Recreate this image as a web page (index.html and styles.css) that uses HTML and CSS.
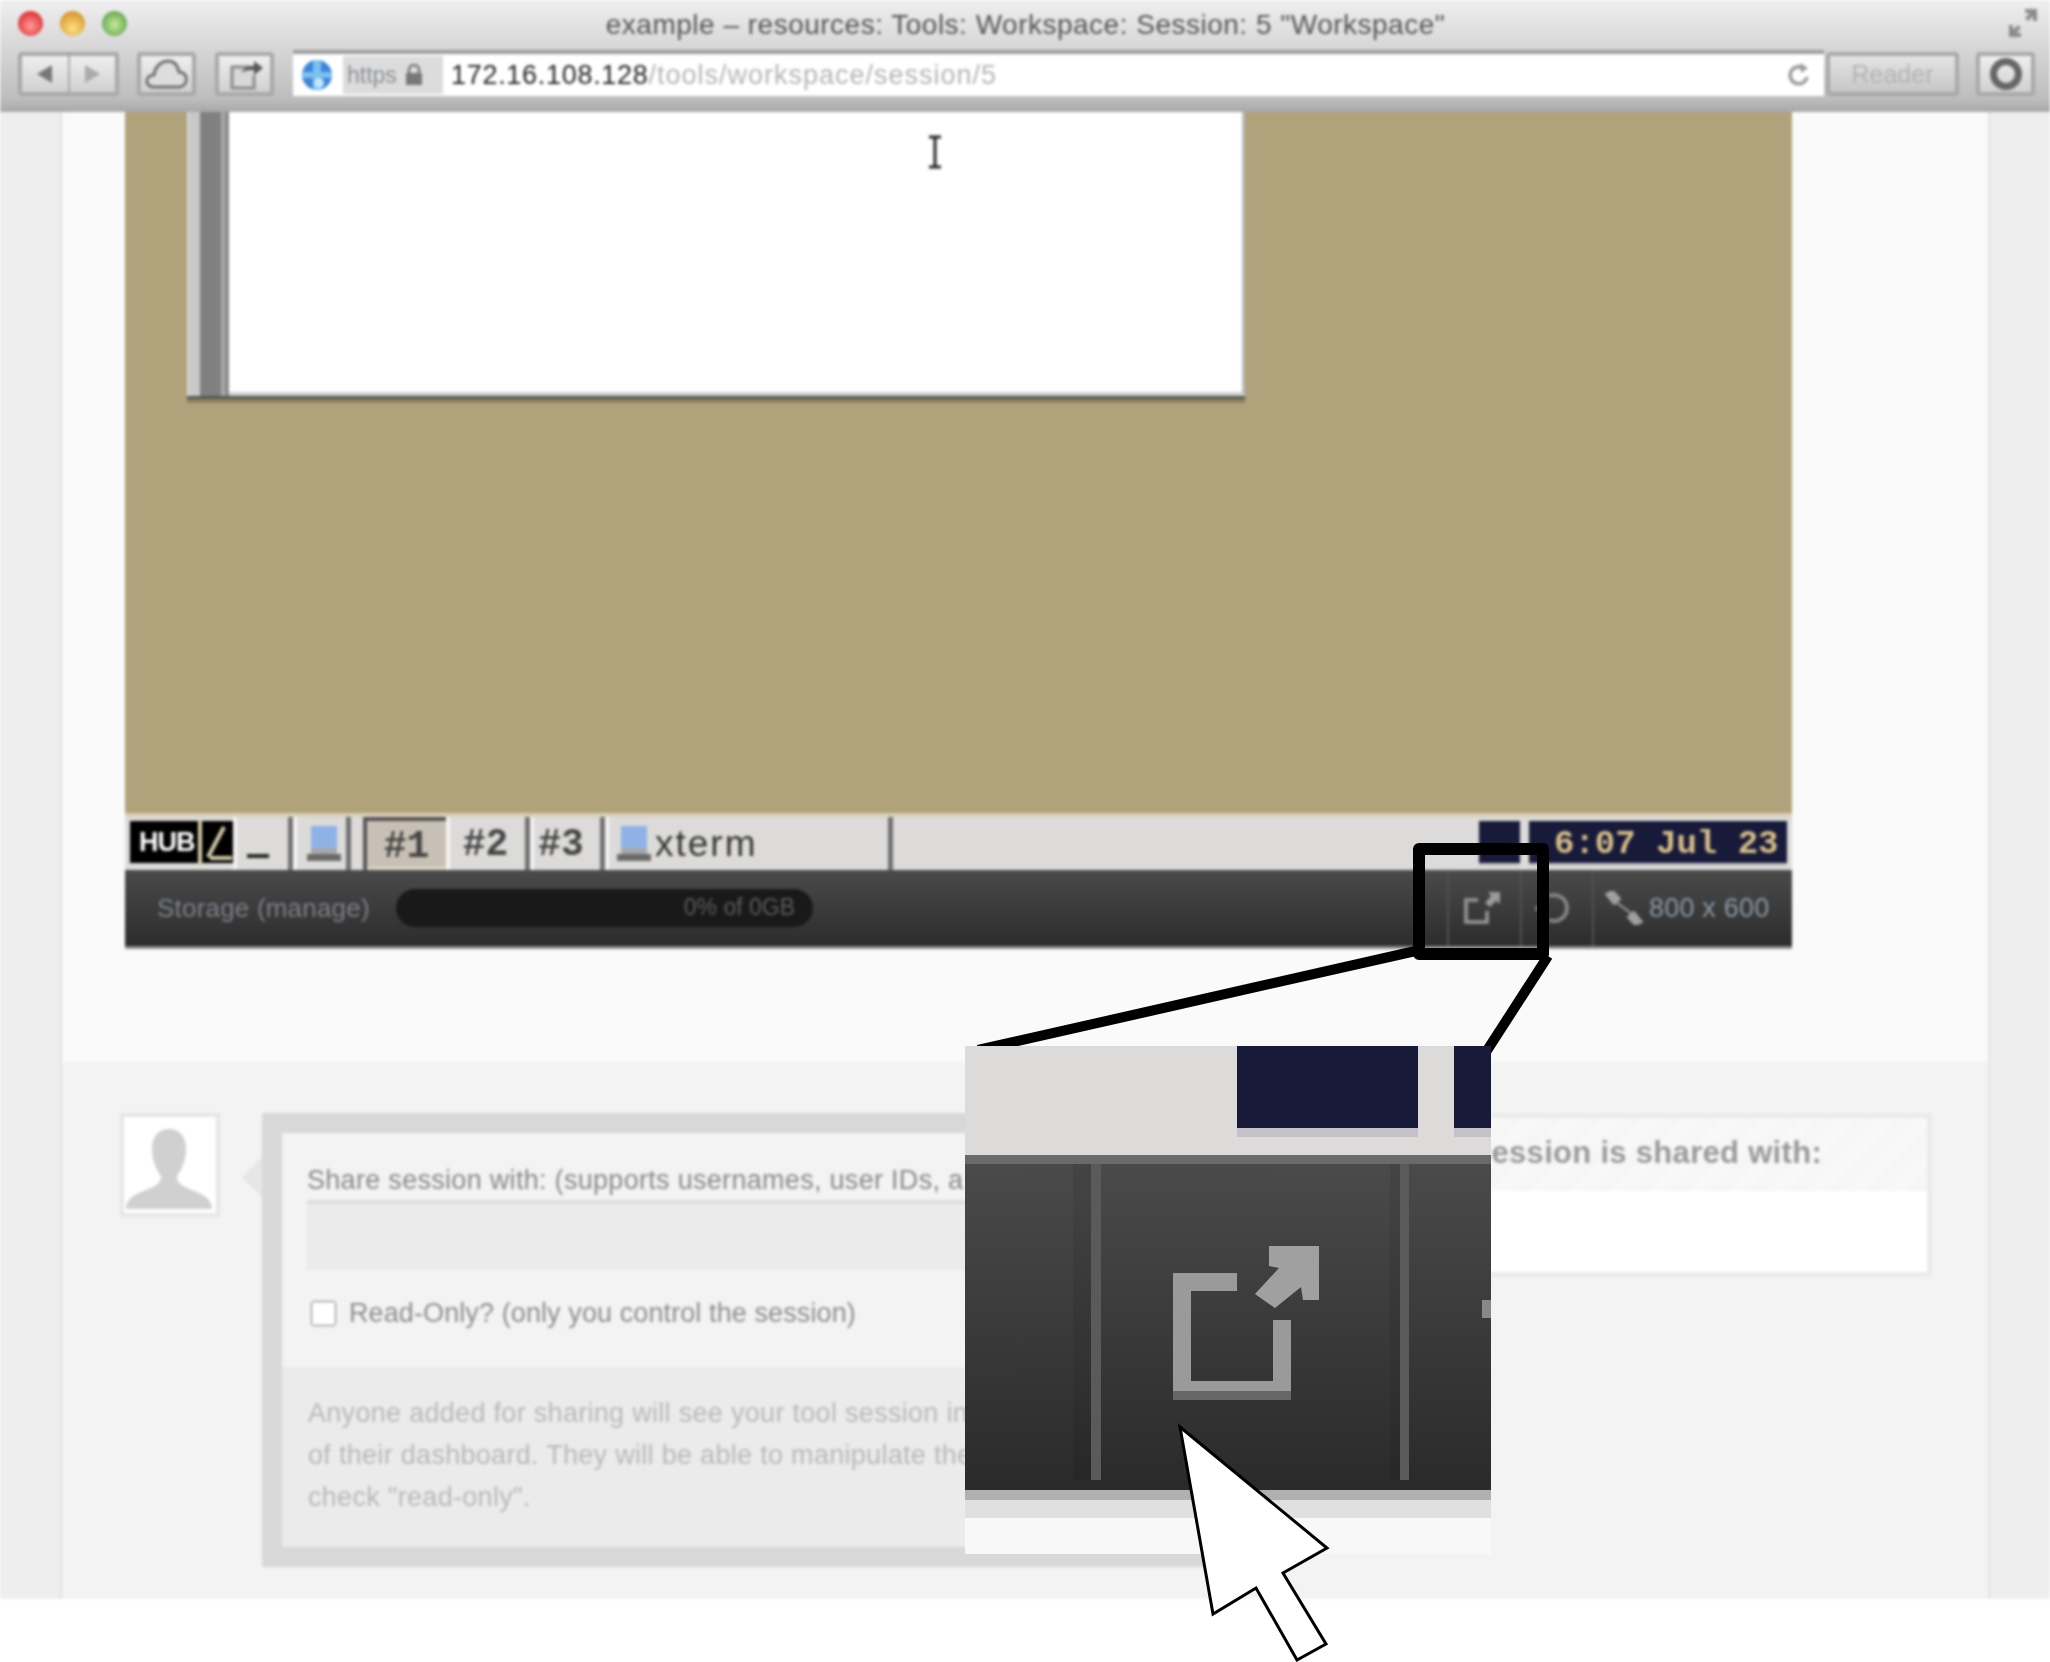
FILE: index.html
```html
<!DOCTYPE html>
<html lang="en">
<head>
    <meta charset="UTF-8">
    <meta name="viewport" content="width=device-width, initial-scale=1.0">
    <title>example - resources: Tools: Workspace: Session: 5 "Workspace"</title>
    <link rel="stylesheet" href="styles.css">
</head>
<body>

<div class="browser">
    <div class="chrome">
        <div class="title-row">
            <span class="light red"></span>
            <span class="light amber"></span>
            <span class="light green"></span>
            <span class="window-title">example – resources: Tools: Workspace: Session: 5 "Workspace"</span>
            <svg class="fullscreen" width="30" height="32" viewBox="0 0 30 32"><path d="M17 2h12v12h-4V9l-5 5-3-3 5-5h-5zM1 18h4v5l5-5 3 3-5 5h5v4H1z" fill="#8a8a8a"/></svg>
        </div>
        <div class="tool-row">
            <div class="tool-btn nav-btn">
                <span class="nav-half"><svg width="18" height="20" viewBox="0 0 18 20"><path d="M16 1v18L1 10z" fill="#777"/></svg></span>
                <span class="nav-half"><svg width="18" height="20" viewBox="0 0 18 20"><path d="M2 1v18l15-9z" fill="#aaa"/></svg></span>
            </div>
            <div class="tool-btn cloud-btn">
                <svg width="44" height="32" viewBox="0 0 44 32"><path d="M9 29c-10 0-9-12 0-12 1-9 8-14 14-14 7 0 10 6 11 11 10 0 10 15-1 15z" fill="#ddd" stroke="#707070" stroke-width="3"/></svg>
            </div>
            <div class="tool-btn share-btn">
                <svg width="38" height="32" viewBox="0 0 38 32"><path d="M24 9H6v21h22V17" fill="#d8d8d8" stroke="#8a8a8a" stroke-width="3"/><path d="M15 15c3-6 8-7 13-7V3l9 7-9 7v-5c-5 0-9 0-13 3z" fill="#555"/></svg>
            </div>
            <div class="url-bar">
                <svg class="globe" width="32" height="32" viewBox="0 0 32 32"><circle cx="16" cy="16" r="15" fill="#3c86d8"/><path d="M12 1h8v30h-8zM1 13h30v6H1z" fill="#7cc0f0"/><circle cx="18" cy="24" r="5" fill="#c4e6fa"/></svg>
                <div class="url-secure">
                    <span>https</span>
                    <svg width="18" height="22" viewBox="0 0 18 22"><path d="M4 10V6a5 5 0 0 1 10 0v4" fill="none" stroke="#777" stroke-width="2.5"/><rect x="1" y="9" width="16" height="12" fill="#777"/></svg>
                </div>
                <div class="url-text"><span class="url-host">172.16.108.128</span><span class="url-path">/tools/workspace/session/5</span></div>
                <svg class="reload" width="24" height="26" viewBox="0 0 24 26"><path d="M20 15a8.500 8.500 0 1 1-4-9" fill="none" stroke="#9a9a9a" stroke-width="3.500"/><path d="M13 1l8 5-7 5z" fill="#9a9a9a"/></svg>
            </div>
            <div class="tool-btn reader-btn">Reader</div>
            <div class="tool-btn dl-btn"><span class="dl-ring"></span></div>
        </div>
    </div>

    <div class="page">
        <div class="sheet">
            <div class="stage">
                <div class="desktop">
                    <div class="screen">
                        <div class="xterm-win">
                            <div class="win-edge"></div>
                            <div class="win-scroll"></div>
                            <div class="win-body"></div>
                        </div>
                        <svg class="ibeam" width="14" height="34" viewBox="0 0 14 34"><path d="M1 2h12M1 32h12M7 2v30" fill="none" stroke="#222" stroke-width="3"/></svg>
                    </div>
                    <div class="taskbar">
                        <div class="logo"><span>HUB</span><svg width="36" height="46" viewBox="0 0 36 46"><path d="M3 0v46M11 38L27 8M13 39h22" fill="none" stroke="#d8cfa8" stroke-width="4"/></svg></div>
                        <div class="task-item min-btn"><span class="min-line"></span></div>
                        <div class="task-item icon-item">
                            <svg class="pc" width="34" height="36" viewBox="0 0 34 36"><rect x="4" y="0" width="26" height="22" fill="#8fb2e6"/><rect x="4" y="22" width="26" height="6" fill="#a8a8a8"/><rect x="0" y="28" width="34" height="7" fill="#6a6a6a"/></svg>
                        </div>
                        <div class="task-item desk-num active">#1</div>
                        <div class="task-item desk-num num-2">#2</div>
                        <div class="task-item desk-num num-3">#3</div>
                        <div class="task-item xterm-task">
                            <svg class="pc" width="34" height="36" viewBox="0 0 34 36"><rect x="4" y="0" width="26" height="22" fill="#8fb2e6"/><rect x="4" y="22" width="26" height="6" fill="#a8a8a8"/><rect x="0" y="28" width="34" height="7" fill="#6a6a6a"/></svg>
                            <span>xterm</span>
                        </div>
                        <div class="tray-box"></div>
                        <div class="clock">6:07 Jul 23</div>
                    </div>
                    <div class="app-bar">
                        <span class="storage-label">Storage (manage)</span>
                        <div class="storage-pill">0% of 0GB</div>
                        <div class="bar-cell popout-cell">
                            <svg width="38" height="34" viewBox="0 0 38 34"><path d="M15 9H3v22h21V20" fill="none" stroke="#8e8e8e" stroke-width="4"/><path d="M25 1h12v12l-4-3-6 6-5-4 6-7z" fill="#9a9a9a"/></svg>
                        </div>
                        <div class="bar-cell refresh-cell">
                            <svg width="38" height="34" viewBox="0 0 38 34"><path d="M14 5a13 13 0 1 1 0 24" fill="none" stroke="#858585" stroke-width="4"/><rect x="0" y="15" width="5" height="5" fill="#777"/></svg>
                        </div>
                        <div class="bar-cell size-cell">
                            <svg width="38" height="34" viewBox="0 0 38 34"><path d="M1 3l7-3 7 8-6 5zM37 31l-7 3-7-8 6-5zM11 11l16 12" fill="#a0a0a0" stroke="#a0a0a0" stroke-width="2"/></svg>
                            <span>800 x 600</span>
                        </div>
                    </div>
                </div>
            </div>

            <div class="share-area">
                <div class="avatar">
                    <svg width="92" height="96" viewBox="0 0 92 96"><path d="M45 12c-11 0-17 8-17 20 0 12 5 22 9 27 0 5-2 8-8 11-10 5-27 8-27 22h86c0-14-17-17-27-22-6-3-8-6-8-11 4-5 9-15 9-27 0-12-6-20-17-20z" fill="#d0d0d0"/></svg>
                </div>
                <div class="share-form">
                    <div class="form-top">
                        <label class="form-label" for="share_with">Share session with: (supports usernames, user IDs, a</label>
                        <input class="form-input" type="text" id="share_with">
                        <label class="read-only"><input type="checkbox"> Read-Only? (only you control the session)</label>
                    </div>
                    <div class="form-hint">
                        <p>Anyone added for sharing will see your tool session in</p>
                        <p>of their dashboard. They will be able to manipulate the</p>
                        <p>check "read-only".</p>
                    </div>
                </div>
                <div class="shared-panel">
                    <div class="shared-head">session is shared with:</div>
                    <div class="shared-body"></div>
                </div>
            </div>
        </div>
    </div>
</div>

<!-- annotation drawn on top of the screenshot -->
<div class="callout-box"></div>
<svg class="callout-lines" width="2050" height="1662" viewBox="0 0 2050 1662">
    <path d="M1420 950L978 1050M1548 956L1486 1052" fill="none" stroke="#000" stroke-width="10"/>
</svg>

<div class="inset">
    <div class="inset-top">
        <div class="inset-navy first"></div>
        <div class="inset-navy second"></div>
    </div>
    <div class="inset-bar">
        <div class="inset-rule first"></div>
        <div class="inset-icon-cell">
            <svg width="146" height="155" viewBox="0 0 146 155">
                <path d="M64 36H9v108h100V74" fill="none" stroke="#9a9a9a" stroke-width="18"/>
                <path d="M0 145h118v9H0z" fill="#666"/>
                <path d="M96 0h50v54h-16l-2-13-26 21-20-14 24-26-10-2z" fill="#a0a0a0"/>
            </svg>
        </div>
        <div class="inset-rule second"></div>
        <div class="inset-spot"></div>
    </div>
    <div class="inset-foot"></div>
</div>

<svg class="pointer" width="2050" height="1662" viewBox="0 0 2050 1662">
    <path d="M1180 1427L1327 1548L1283 1573L1326 1644L1297 1660L1256 1588L1213 1614z" fill="#fff" stroke="#000" stroke-width="3"/>
</svg>

</body>
</html>
```

FILE: styles.css
```css
* {
    box-sizing: border-box;
}
body {
    margin: 0;
    width: 2050px;
    height: 1662px;
    overflow: hidden;
    position: relative;
    background-color: #fff;
    font-family: "Liberation Sans", Arial, sans-serif;
}
.browser {
    filter: blur(1.4px);
}

/* browser chrome */
.chrome {
    height: 112px;
    background: linear-gradient(#efefef, #d8d8d8 40%, #bdbdbd 88%, #a8a8a8);
}
.title-row {
    height: 50px;
    display: flex;
    align-items: center;
    padding: 0 12px 4px 18px;
    gap: 17px;
}
.light {
    width: 25px;
    height: 25px;
    border-radius: 50%;
}
.red {
    background: radial-gradient(circle at 50% 60%, #ff9a9a, #e03838 70%);
}
.amber {
    background: radial-gradient(circle at 50% 70%, #ffe080, #d89830 75%);
}
.green {
    background: radial-gradient(circle at 50% 55%, #c8ea9c, #62a850 75%);
}
.window-title {
    flex: 1;
    text-align: center;
    font-size: 28px;
    letter-spacing: 0.5px;
    color: #555;
    margin-left: -20px;
    padding: 3px 64px 0 0;
    white-space: nowrap;
}
.tool-row {
    height: 46px;
    display: flex;
    padding-left: 18px;
}
.tool-btn {
    height: 44px;
    margin-top: 2px;
    border: 4px solid #a8a8a8;
    border-radius: 4px;
    background: linear-gradient(#efefef, #d0d0d0);
    display: flex;
    align-items: center;
    justify-content: center;
}
.nav-btn {
    width: 101px;
}
.nav-half {
    flex: 1;
    height: 100%;
    display: flex;
    align-items: center;
    justify-content: center;
}
.nav-half:first-child {
    border-right: 2px solid #aaa;
}
.cloud-btn {
    width: 59px;
    margin-left: 18px;
}
.share-btn {
    width: 59px;
    margin-left: 19px;
}
.url-bar {
    width: 1531px;
    height: 46px;
    margin-left: 19px;
    border-top: 4px solid #9c9c9c;
    background-color: #fff;
    display: flex;
    align-items: center;
}
.globe {
    margin-left: 8px;
    flex-shrink: 0;
}
.url-secure {
    width: 100px;
    height: 38px;
    margin-left: 10px;
    padding-left: 4px;
    background-color: #dcdcdc;
    display: flex;
    align-items: center;
    gap: 8px;
    font-size: 23px;
    color: #8a8f96;
}
.url-text {
    flex: 1;
    padding-left: 8px;
    font-size: 27px;
    white-space: nowrap;
}
.url-host {
    color: #222;
    letter-spacing: 0.7px;
}
.url-path {
    color: #b4b4b4;
    letter-spacing: 1px;
}
.reload {
    margin-right: 13px;
}
.reader-btn {
    width: 133px;
    margin-left: 2px;
    font-size: 25px;
    color: #b4b4b4;
    background: linear-gradient(#e4e4e4, #c6c6c6);
}
.dl-btn {
    width: 59px;
    margin-left: 17px;
}
.dl-ring {
    width: 32px;
    height: 32px;
    border: 7px solid #666;
    border-radius: 50%;
}

/* page */
.page {
    height: 1487px;
    background-color: #eeeeee;
    padding: 0 62px;
}
.sheet {
    height: 100%;
    background-color: #fafafa;
    box-shadow: -2px 0 0 #e2e2e2, 2px 0 0 #e2e2e2;
    display: flex;
    flex-direction: column;
}
.stage {
    height: 950px;
    padding-left: 63px;
}
.desktop {
    width: 1667px;
    height: 837px;
    border-bottom: 3px solid #8a8a8a;
}
.screen {
    height: 705px;
    position: relative;
    background-color: #b0a27a;
    border-bottom: 4px solid #d8d0b8;
}
.xterm-win {
    position: absolute;
    left: 62px;
    top: 0;
    width: 1058px;
    height: 287px;
    display: flex;
    background-color: #fff;
    border-bottom: 3px solid #555;
    box-shadow: 0 4px 0 #8f8460;
}
.win-edge {
    width: 13px;
    background: linear-gradient(90deg, #ddd, #c8c8c8 25%);
}
.win-scroll {
    width: 29px;
    background-color: #808080;
    border-right: 4px solid #8a8a8a;
    box-shadow: inset -4px 0 0 #a8a8a8;
}
.win-body {
    flex: 1;
    border-right: 3px solid #bbb;
    border-bottom: 4px solid #d0d0d0;
}
.ibeam {
    position: absolute;
    left: 803px;
    top: 23px;
}

/* desktop taskbar */
.taskbar {
    height: 53px;
    background-color: #dcdbd9;
    display: flex;
    align-items: stretch;
    font-family: "Liberation Mono", monospace;
    font-weight: bold;
}
.logo {
    width: 103px;
    height: 42px;
    margin: 4px 0 0 5px;
    background-color: #000;
    color: #fff;
    font-family: "Liberation Sans", sans-serif;
    font-size: 27px;
    letter-spacing: -1px;
    display: flex;
    align-items: center;
    padding-left: 9px;
}
.logo svg {
    margin-left: 2px;
    flex-shrink: 0;
}
.task-item {
    display: flex;
    align-items: center;
    border-right: 5px solid #707070;
    box-shadow: inset 4px 0 0 #f4f4f4;
}
.min-btn {
    width: 60px;
    padding: 25px 0 0 14px;
}
.min-line {
    width: 22px;
    height: 4px;
    background-color: #222;
}
.icon-item {
    width: 58px;
    padding-left: 14px;
}
.desk-num {
    justify-content: center;
    font-size: 38px;
    color: #444;
    padding-top: 2px;
}
.active {
    width: 83px;
    margin-left: 12px;
    background-color: #c9c0b5;
    border: 0;
    border-top: 4px solid #555;
    border-left: 4px solid #555;
    box-shadow: inset 0 -3px 0 #e0d8c8;
}
.num-2 {
    width: 84px;
}
.num-3 {
    width: 75px;
    padding-right: 8px;
}
.xterm-task {
    width: 288px;
    padding-left: 12px;
    gap: 4px;
    color: #333;
    font-family: "Liberation Sans", sans-serif;
    font-size: 37px;
    letter-spacing: 2px;
    font-weight: normal;
}
.tray-box {
    width: 41px;
    height: 45px;
    margin: 4px 0 0 586px;
    background-color: #181a3a;
    border-bottom: 3px solid #c4c2c7;
}
.clock {
    width: 258px;
    height: 45px;
    margin: 4px 0 0 9px;
    background-color: #181a3a;
    border-bottom: 3px solid #c4c2c7;
    color: #d8c088;
    font-size: 34px;
    line-height: 47px;
    padding-left: 25px;
    white-space: nowrap;
    overflow: hidden;
}

/* bar under the desktop */
.app-bar {
    height: 76px;
    background: linear-gradient(#4a4a4a, #2c2c2c);
    display: flex;
    align-items: center;
}
.storage-label {
    width: 271px;
    padding-left: 32px;
    font-size: 26px;
    letter-spacing: 0.2px;
    color: #7c8088;
    white-space: nowrap;
}
.storage-pill {
    width: 417px;
    height: 38px;
    border-radius: 19px;
    background-color: #191919;
    color: #5c5c5c;
    font-size: 23px;
    line-height: 36px;
    text-align: right;
    padding-right: 18px;
}
.bar-cell {
    height: 100%;
    border-left: 2px solid #505050;
    display: flex;
    align-items: center;
    flex-shrink: 0;
}
.popout-cell {
    width: 73px;
    margin-left: 634px;
    padding-left: 14px;
}
.refresh-cell {
    width: 72px;
    padding-left: 13px;
}
.size-cell {
    flex: 1;
    padding-left: 11px;
    gap: 6px;
    color: #8a98a5;
    font-size: 27px;
    letter-spacing: 0.2px;
    white-space: nowrap;
}

/* share section */
.share-area {
    flex: 1;
    background-color: #f3f3f3;
    display: flex;
    align-items: flex-start;
    padding: 51px 0 0 58px;
}
.avatar {
    width: 100px;
    height: 104px;
    background-color: #fff;
    border: 4px solid #e6e6e6;
    flex-shrink: 0;
}
.share-form {
    width: 978px;
    height: 454px;
    margin-left: 42px;
    position: relative;
    border: 20px solid #d8d8d8;
    background-color: #f3f3f3;
    flex-shrink: 0;
}
.share-form::before {
    content: "";
    position: absolute;
    left: -40px;
    top: 24px;
    border: 20px solid transparent;
    border-left: 0;
    border-right-color: #e6e6e6;
}
.form-top {
    height: 234px;
    padding: 32px 0 0 25px;
}
.form-label {
    display: block;
    font-size: 27px;
    letter-spacing: 0.3px;
    color: #888;
    white-space: nowrap;
}
.form-input {
    display: block;
    width: 100%;
    height: 70px;
    margin-top: 4px;
    background-color: #ebebeb;
    border: 0;
    border-top: 4px solid #dedede;
    outline: 0;
}
.read-only {
    display: flex;
    align-items: center;
    gap: 13px;
    margin-top: 28px;
    font-size: 27px;
    letter-spacing: 0.1px;
    color: #8c8c8c;
    white-space: nowrap;
}
.read-only input {
    width: 25px;
    height: 27px;
    margin: 0 0 0 4px;
}
.form-hint {
    height: 180px;
    background-color: #ebebeb;
    padding: 25px 0 0 26px;
    font-size: 27px;
    letter-spacing: 0.3px;
    line-height: 42px;
    color: #b8b8b8;
    white-space: nowrap;
}
.form-hint p {
    margin: 0;
}
.shared-panel {
    width: 612px;
    height: 164px;
    margin-left: 80px;
    border: 5px solid #ebebeb;
    flex-shrink: 0;
}
.shared-head {
    height: 73px;
    background: repeating-linear-gradient(135deg, #f8f8f8 0 14px, #f6f6f6 14px 28px);
    padding-left: 149px;
    line-height: 70px;
    font-size: 31px;
    letter-spacing: 0.3px;
    font-weight: bold;
    color: #999;
    white-space: nowrap;
}
.shared-body {
    height: 81px;
    background-color: #fff;
}

/* zoom annotation */
.callout-box {
    position: absolute;
    left: 1413px;
    top: 843px;
    width: 136px;
    height: 117px;
    border: 12px solid #000;
    border-radius: 6px;
}
.callout-lines,
.pointer {
    position: absolute;
    left: 0;
    top: 0;
}
.inset {
    position: absolute;
    left: 965px;
    top: 1046px;
    width: 526px;
    height: 508px;
    display: flex;
    flex-direction: column;
}
.inset-top {
    height: 109px;
    background-color: #dcdbd9;
    display: flex;
    align-items: flex-start;
    padding-left: 272px;
}
.inset-navy {
    height: 91px;
    background-color: #181a3a;
    border-bottom: 9px solid #c4c2c7;
}
.inset-navy.first {
    width: 181px;
}
.inset-navy.second {
    width: 37px;
    margin-left: 36px;
}
.inset-bar {
    height: 335px;
    background: linear-gradient(#4a4a4a, #2a2a2a);
    border-top: 9px solid #6a6a6a;
    display: flex;
    padding-left: 108px;
}
.inset-rule {
    width: 28px;
    height: 316px;
    border-left: 18px solid rgba(0, 0, 0, 0.07);
    border-right: 10px solid #5a5a5a;
    flex-shrink: 0;
}
.inset-rule.second {
    width: 19px;
    border-left-width: 10px;
    border-right-width: 9px;
}
.inset-icon-cell {
    width: 289px;
    padding: 82px 0 0 72px;
}
.inset-spot {
    width: 9px;
    height: 18px;
    margin: 136px 0 0 73px;
    background-color: #888;
}
.inset-foot {
    flex: 1;
    background: linear-gradient(#b0b0b0 10px, #e0e0e0 10px, #e0e0e0 28px, #f8f8f8 28px);
}
```
